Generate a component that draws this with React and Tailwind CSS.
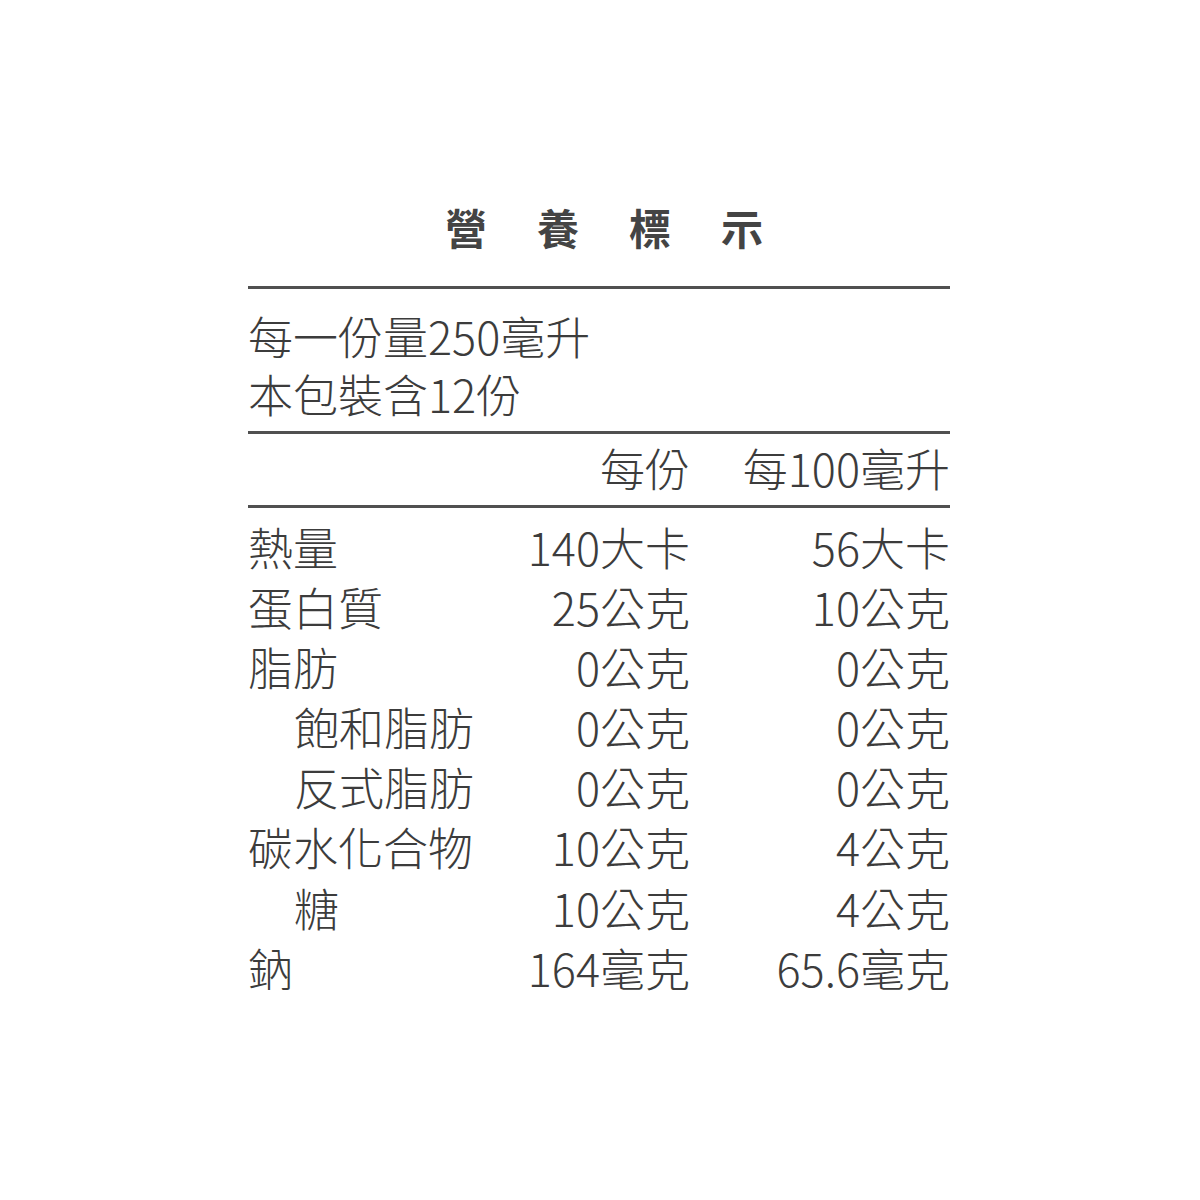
import React from "react";

const rows = [
  { name: "熱量", per: "140大卡", per100: "56大卡" },
  { name: "蛋白質", per: "25公克", per100: "10公克" },
  { name: "脂肪", per: "0公克", per100: "0公克" },
  { name: "飽和脂肪", per: "0公克", per100: "0公克", sub: true },
  { name: "反式脂肪", per: "0公克", per100: "0公克", sub: true },
  { name: "碳水化合物", per: "10公克", per100: "4公克" },
  { name: "糖", per: "10公克", per100: "4公克", sub: true },
  { name: "鈉", per: "164毫克", per100: "65.6毫克" },
];

function Rule() {
  return <div className="h-[3px] w-full bg-[#505050]"></div>;
}

export default function App() {
  return (
    <div
      className="min-h-[1200px] w-[1200px] bg-white text-[#3c3c3c]"
      style={{ fontFamily: '"Noto Sans CJK TC", "Noto Sans", sans-serif' }}
    >
      <div className="ml-[248px] w-[702px] pt-[205px]">
        {/* title */}
        <div className="pl-[197px] text-[42px] font-bold leading-[44px] tracking-[50px] text-[#444]">
          營養標示
        </div>
        <div className="mt-[37px]">
          <Rule />
        </div>

        {/* serving info */}
        <div className="pt-[17px] text-[45px] font-light leading-none">
          <div className="flex h-[58px] items-center">每一份量250毫升</div>
          <div className="flex h-[58px] items-center">本包裝含12份</div>
        </div>
        <div className="mt-[9px]">
          <Rule />
        </div>

        {/* header */}
        <div className="grid h-[71px] grid-cols-[1fr_200px_260px] items-center pb-[7px] text-[45px] font-light">
          <div></div>
          <div className="text-right">每份</div>
          <div className="text-right">每100毫升</div>
        </div>
        <Rule />

        {/* rows */}
        <div className="pt-[5px]">
          {rows.map((r) => (
            <div
              key={r.name}
              className="grid h-[60.1px] grid-cols-[1fr_200px_260px] items-center text-[45px] font-light"
            >
              <div className={r.sub ? "pl-[46px]" : ""}>{r.name}</div>
              <div className="text-right">{r.per}</div>
              <div className="text-right">{r.per100}</div>
            </div>
          ))}
        </div>
      </div>
    </div>
  );
}
